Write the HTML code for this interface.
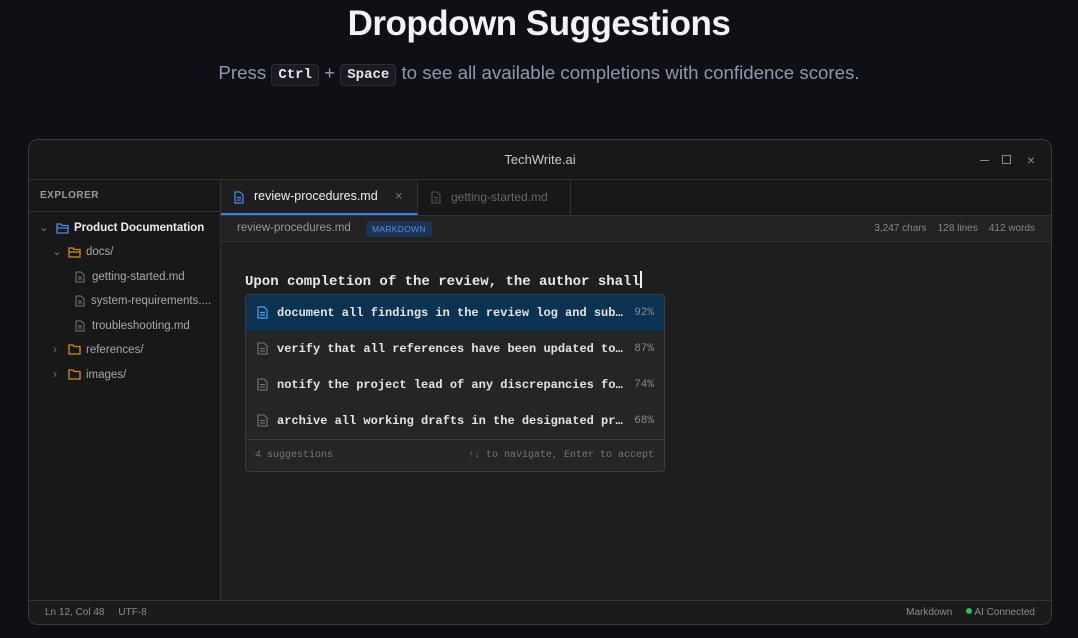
<!DOCTYPE html>
<html><head><style>
*{box-sizing:border-box;margin:0;padding:0}
body{width:1078px;height:638px;overflow:hidden;background:#0f0f16;font-family:"Liberation Sans",sans-serif;position:relative;color:#ddd}
.abs{position:absolute}
h1{position:absolute;top:4px;left:0;width:1078px;text-align:center;font-size:35px;font-weight:bold;color:#f2f3f7;letter-spacing:-0.5px}
.sub{position:absolute;top:62px;left:0;width:1078px;text-align:center;font-size:18.7px;color:#8e97ab}
kbd{display:inline-block;font-family:"Liberation Mono",monospace;font-size:14px;font-weight:bold;color:#e6e6e6;background:#1a1a22;border:1px solid #2e2e38;border-radius:4px;padding:2px 6px;vertical-align:1px}
.win{left:28px;top:139px;width:1024px;height:486px;border:1px solid #3a3a3a;border-radius:10px;background:#1e1e1e;overflow:hidden}
.title{left:0;top:0;width:1022px;height:40px;background:#181818;border-bottom:1px solid #333;text-align:center;line-height:40px;font-size:13px;color:#c8c8c8}
.side{left:0;top:40px;width:192px;height:420px;background:#181818;border-right:1px solid #333}
.side .hd{height:32px;line-height:32px;padding-left:11px;font-size:10px;font-weight:bold;color:#9a9a9a;border-bottom:1px solid #333;letter-spacing:.5px}
.it{position:absolute;font-size:11.5px;color:#a8a8a8;white-space:nowrap;height:20px;line-height:20px}
.tabs{left:192px;top:40px;width:830px;height:36px;background:#181818;border-bottom:1px solid #333}
.info{left:192px;top:76px;width:830px;height:26px;background:#222;border-bottom:1px solid #333;font-size:11px;color:#9a9a9a}
.mono{font-family:"Liberation Mono",monospace}
.dd{left:216px;top:154px;width:420px;height:178px;border:1px solid #3c3c3c;border-radius:4px;background:#252525;overflow:hidden}
.row{position:absolute;left:0;width:418px;height:36px;line-height:36px;font-family:"Liberation Mono",monospace;font-weight:bold;font-size:12px;color:#e4e4e4}
.row .t{position:absolute;left:31px}
.row .p{position:absolute;right:10px;font-weight:normal;font-size:11px;color:#888}
.row svg{position:absolute;left:11px;top:11px}
.status{left:0;top:460px;width:1022px;height:24px;border-top:1px solid #333;background:#1b1b1b;font-size:10px;color:#8a8a8a;line-height:24px}
</style></head><body>
<h1>Dropdown Suggestions</h1>
<div class="sub">Press <kbd>Ctrl</kbd> + <kbd>Space</kbd> to see all available completions with confidence scores.</div>
<div class="abs win">
 <div class="abs title">TechWrite.ai
  <span class="abs" style="right:62px;top:20px;width:9px;height:1px;background:#888"></span>
  <span class="abs" style="right:40px;top:15px;width:9px;height:9px;border:1px solid #888"></span>
  <span class="abs" style="right:16px;top:0;font-size:14px;color:#888">×</span>
 </div>
 <div class="abs side">
  <div class="hd">EXPLORER</div>
  <div class="it" style="left:10px;top:38px;color:#777">⌄</div>
  <svg class="abs" style="left:27px;top:43px" width="13" height="11" viewBox="0 0 13 11"><path d="M1 1h4l1 1.5h6v7.5H1z" fill="none" stroke="#4a8cf0" stroke-width="1.3"/><path d="M1 5h11" stroke="#4a8cf0" stroke-width="1.2"/></svg>
  <div class="it" style="left:45px;top:38px;color:#eee;font-weight:bold">Product Documentation</div>
  <div class="it" style="left:23px;top:62px;color:#777">⌄</div>
  <svg class="abs" style="left:39px;top:67px" width="13" height="11" viewBox="0 0 13 11"><path d="M1 1h4l1 1.5h6v7.5H1z" fill="none" stroke="#d98a1c" stroke-width="1.3"/><path d="M1 5h11" stroke="#d98a1c" stroke-width="1.2"/></svg>
  <div class="it" style="left:57px;top:62px">docs/</div>
  <svg class="abs" style="left:46px;top:91px" width="10" height="12" viewBox="0 0 10 12"><path d="M1 1h5l3 3v7H1z M3 6h4M3 8h4" fill="none" stroke="#777" stroke-width="1"/></svg>
  <div class="it" style="left:63px;top:87px">getting-started.md</div>
  <svg class="abs" style="left:46px;top:115px" width="10" height="12" viewBox="0 0 10 12"><path d="M1 1h5l3 3v7H1z M3 6h4M3 8h4" fill="none" stroke="#777" stroke-width="1"/></svg>
  <div class="it" style="left:62px;top:111px">system-requirements....</div>
  <svg class="abs" style="left:46px;top:140px" width="10" height="12" viewBox="0 0 10 12"><path d="M1 1h5l3 3v7H1z M3 6h4M3 8h4" fill="none" stroke="#777" stroke-width="1"/></svg>
  <div class="it" style="left:63px;top:136px">troubleshooting.md</div>
  <div class="it" style="left:24px;top:160px;color:#777">›</div>
  <svg class="abs" style="left:39px;top:164px" width="13" height="11" viewBox="0 0 13 11"><path d="M1 1h4l1 1.5h6v7.5H1z" fill="none" stroke="#d98a1c" stroke-width="1.3"/></svg>
  <div class="it" style="left:57px;top:160px">references/</div>
  <div class="it" style="left:24px;top:185px;color:#777">›</div>
  <svg class="abs" style="left:39px;top:189px" width="13" height="11" viewBox="0 0 13 11"><path d="M1 1h4l1 1.5h6v7.5H1z" fill="none" stroke="#d98a1c" stroke-width="1.3"/></svg>
  <div class="it" style="left:57px;top:185px">images/</div>
 </div>
 <div class="abs tabs">
  <div class="abs" style="left:0;top:0;width:197px;height:35px;background:#1e1e1e;border-right:1px solid #333;border-bottom:2px solid #3b82f6">
   <svg class="abs" style="left:13px;top:11px" width="10" height="13" viewBox="0 0 10 13"><path d="M1 1h5l3 3v8H1z M3 6.5h4M3 9h4" fill="none" stroke="#4a8cf0" stroke-width="1.2"/></svg>
   <span class="abs" style="left:33px;top:9px;font-size:12.5px;color:#eee">review-procedures.md</span>
   <span class="abs" style="left:174px;top:8px;font-size:13px;color:#777">×</span>
  </div>
  <div class="abs" style="left:197px;top:0;width:153px;height:35px;border-right:1px solid #333">
   <svg class="abs" style="left:13px;top:11px" width="10" height="13" viewBox="0 0 10 13"><path d="M1 1h5l3 3v8H1z M3 6.5h4M3 9h4" fill="none" stroke="#555" stroke-width="1.1"/></svg>
   <span class="abs" style="left:33px;top:10px;font-size:12px;color:#666">getting-started.md</span>
  </div>
 </div>
 <div class="abs info">
  <span class="abs" style="left:16px;top:6px;font-size:11.5px">review-procedures.md</span>
  <span class="abs" style="left:145px;top:5px;height:16px;line-height:16px;padding:0 6px;background:#1e3350;color:#4d8fe8;font-size:8.5px;border-radius:3px;letter-spacing:.3px">MARKDOWN</span>
  <span class="abs" style="right:16px;top:7px;font-size:10px;color:#888">3,247 chars &nbsp;&nbsp; 128 lines &nbsp;&nbsp; 412 words</span>
 </div>
 <div class="abs mono" style="left:216px;top:131px;font-size:14px;font-weight:bold;color:#e8e8e8;white-space:nowrap">Upon completion of the review, the author shall<span style="display:inline-block;width:2px;height:17px;background:#eee;vertical-align:-3px"></span></div>
 <div class="abs dd">
  <div class="row" style="top:0;background:#0c3251"><svg width="11" height="13" viewBox="0 0 11 13"><path d="M1 1h6l3 3v8H1z M3 6.5h5M3 9h5" fill="none" stroke="#4ea3ef" stroke-width="1.2"/></svg><span class="t">document all findings in the review log and sub…</span><span class="p">92%</span></div>
  <div class="row" style="top:36px"><svg width="11" height="13" viewBox="0 0 11 13"><path d="M1 1h6l3 3v8H1z M3 6.5h5M3 9h5" fill="none" stroke="#777" stroke-width="1.1"/></svg><span class="t">verify that all references have been updated to…</span><span class="p">87%</span></div>
  <div class="row" style="top:72px"><svg width="11" height="13" viewBox="0 0 11 13"><path d="M1 1h6l3 3v8H1z M3 6.5h5M3 9h5" fill="none" stroke="#777" stroke-width="1.1"/></svg><span class="t">notify the project lead of any discrepancies fo…</span><span class="p">74%</span></div>
  <div class="row" style="top:108px"><svg width="11" height="13" viewBox="0 0 11 13"><path d="M1 1h6l3 3v8H1z M3 6.5h5M3 9h5" fill="none" stroke="#777" stroke-width="1.1"/></svg><span class="t">archive all working drafts in the designated pr…</span><span class="p">68%</span></div>
  <div class="abs mono" style="left:0;top:144px;width:418px;height:33px;border-top:1px solid #3c3c3c;font-size:10px;color:#777;line-height:32px">
   <span class="abs" style="left:9px">4 suggestions</span><span class="abs" style="right:10px">↑↓ to navigate, Enter to accept</span>
  </div>
 </div>
 <div class="abs status">
  <span class="abs" style="left:16px">Ln 12, Col 48 &nbsp;&nbsp;&nbsp; UTF-8</span>
  <span class="abs" style="right:16px">Markdown &nbsp;&nbsp;&nbsp; <span style="display:inline-block;width:6px;height:6px;border-radius:50%;background:#22c55e;vertical-align:1px"></span> AI Connected</span>
 </div>
</div>
</body></html>
